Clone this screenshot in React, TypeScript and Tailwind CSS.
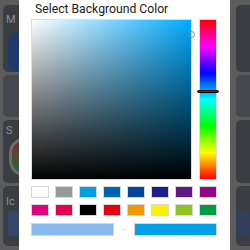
const presets = [
  "#ffffff", "#9a9a9a", "#009fe3", "#0062b1", "#00469c", "#1d2088", "#601986", "#920783",
  "#e4007f", "#e5004f", "#000000", "#e60012", "#f39800", "#fff100", "#8fc31f", "#009944",
];

const SideStrip = ({ side }: { side: "left" | "right" }) => {
  const left = side === "left";
  return (
    <div className={`h-full bg-[#5c5c5c] flex flex-col gap-[3px] pt-[5px] ${left ? "w-[19px] pl-[3px]" : "w-[20px] pl-[6px]"}`}>
      <div className="h-[67px] bg-[#3a3e43] relative overflow-hidden rounded-l-[5px]">
        {left && (
          <>
            <span className="absolute left-[3px] top-[9px] text-[11px] leading-none text-[#8a8e93]">M</span>
            <div className="absolute left-[5px] top-[28px] w-[30px] h-[38px] rounded-[8px] bg-[#1d3a6b]" />
          </>
        )}
      </div>
      <div className="h-[42px] bg-[#44484c] rounded-l-[5px]" />
      <div className="h-[63px] bg-[#3a3e43] relative overflow-hidden rounded-l-[5px]">
        {left && (
          <>
            <span className="absolute left-[3px] top-[5px] text-[11px] leading-none text-[#8a8e93]">S</span>
            <div className="absolute left-[6px] top-[18px] w-[30px] h-[38px] rounded-full border-[3px] border-[#6a6e72] bg-[linear-gradient(to_bottom,#7a2a2a,#2a6a3e)]" />
          </>
        )}
      </div>
      <div className="h-[60px] bg-[#3a3e43] relative overflow-hidden rounded-l-[5px]">
        {left ? (
          <>
            <span className="absolute left-[3px] top-[10px] text-[11px] leading-none text-[#8a8e93]">Ic</span>
            <div className="absolute left-[5px] top-[25px] w-[30px] h-[25px] rounded-[4px] bg-[#34476b]" />
          </>
        ) : (
          <div className="absolute left-[0px] top-[25px] w-[14px] h-[25px] rounded-r-[4px] bg-[#32405c]" />
        )}
      </div>
    </div>
  );
};

export default function App() {
  return (
    <div className="w-[250px] h-[250px] flex overflow-hidden bg-[#5c5c5c] font-['Roboto',sans-serif]">
      <SideStrip side="left" />
      <div className="w-[211px] h-full bg-white pl-[12px] pr-[13px] flex flex-col">
        <div className="h-[19px] pl-[4px] pt-[1px] text-[12.2px] leading-[16px] text-[#202020] whitespace-nowrap">
          Select Background Color
        </div>
        <div className="flex gap-[7px]">
          <div className="relative w-[161px] h-[161px] bg-[#00aaff] border border-[#dcdcdc]">
            <div className="absolute inset-0 bg-gradient-to-r from-white to-transparent" />
            <div className="absolute inset-0 bg-gradient-to-b from-transparent to-black" />
            <div className="absolute right-[-4px] top-[11px] w-[7px] h-[7px] rounded-full border border-[#8a8a8a]" />
          </div>
          <div className="relative w-[18px] h-[161px] border border-[#dcdcdc] bg-[linear-gradient(to_bottom,#ff0000,#ff00ff,#0000ff,#00ffff,#00ff00,#ffff00,#ff0000)]">
            <div className="absolute left-[-3px] right-[-3px] top-[70px] h-[3px] rounded-full bg-[#2a4a5a] border border-black" />
          </div>
        </div>
        <div className="mt-[6px] grid grid-cols-8 gap-x-[6px] gap-y-[6px] w-[186px]">
          {presets.map((c) => (
            <div key={c} className="h-[12px] border border-[#d8d8d8]" style={{ backgroundColor: c }} />
          ))}
        </div>
        <div className="mt-[7px] flex items-center w-[186px]">
          <div className="w-[83px] h-[13px] bg-[#8ab9ec] border border-[#d6d6d6]" />
          <div className="flex-1 flex justify-center text-[8px] leading-none text-[#bbbbbb]">-</div>
          <div className="w-[83px] h-[13px] bg-[#00a0e9] border border-[#d6d6d6]" />
        </div>
      </div>
      <SideStrip side="right" />
    </div>
  );
}
